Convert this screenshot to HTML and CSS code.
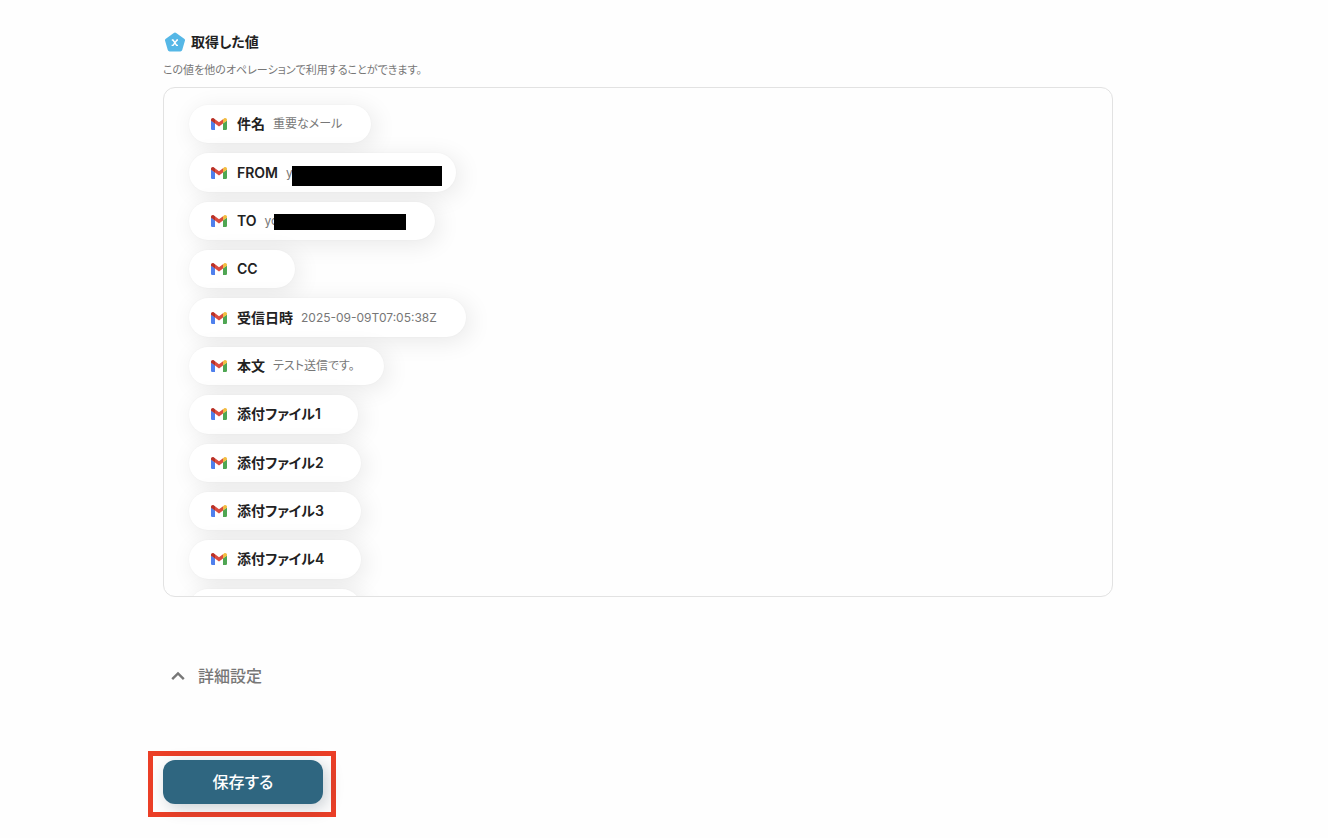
FILE: index.html
```html
<!DOCTYPE html>
<html lang="ja">
<head>
<meta charset="utf-8">
<meta name="viewport" content="width=device-width, initial-scale=1">
<title>取得した値</title>
<link rel="stylesheet" href="styles.css">
</head>
<body>
<svg class="defs" aria-hidden="true">
  <symbol id="gmail" viewBox="0 0 16 12">
    <path fill="#4f80ed" d="M0 2.5 4 5.2V12H1.2Q0 12 0 10.8Z"/>
    <path fill="#4fa653" d="M16 2.5 12 5.2V12h2.8q1.2 0 1.2-1.2Z"/>
    <path fill="#db4c3f" d="M4 1.2 8 4.2l4-3v4.2L8 8.4 4 5.4Z"/>
    <path fill="#f2bd42" d="M12 1.2 13 .5C14.3-.5 16 .3 16 1.8v1L12 5.6Z"/>
    <path fill="#b93127" d="M4 1.2 3 .5C1.7-.5 0 .3 0 1.8v1l4 2.8Z"/>
  </symbol>
</svg>
<main class="page">
  <section class="output">
    <h2 class="title">
      <svg class="title-icon" viewBox="0 0 20 20" aria-hidden="true"><path d="M10 2.500 18 8.300 15.300 17.500H4.700L2 8.300Z" fill="#55b7e6" stroke="#55b7e6" stroke-width="4" stroke-linejoin="round"/><path d="M6.800 8h1.200l3.600 5.400h1.400M13 8h-1L8 13.400H6.600" fill="none" stroke="#fff" stroke-width="1.400"/></svg>
      取得した値
    </h2>
    <p class="hint">この値を他のオペレーションで利用することができます。</p>
    <div class="panel">
      <ul class="list">
        <li class="pill"><svg class="mail"><use href="#gmail"/></svg><b class="name">件名</b><span class="value">重要なメール</span></li>
        <li class="pill"><svg class="mail"><use href="#gmail"/></svg><b class="name">FROM</b><span class="value value-masked">y<i class="mask mask-from"></i></span></li>
        <li class="pill"><svg class="mail"><use href="#gmail"/></svg><b class="name">TO</b><span class="value value-masked">yo<i class="mask mask-to"></i></span></li>
        <li class="pill"><svg class="mail"><use href="#gmail"/></svg><b class="name">CC</b><span class="value"></span></li>
        <li class="pill"><svg class="mail"><use href="#gmail"/></svg><b class="name">受信日時</b><span class="value">2025-09-09T07:05:38Z</span></li>
        <li class="pill"><svg class="mail"><use href="#gmail"/></svg><b class="name">本文</b><span class="value">テスト送信です。</span></li>
        <li class="pill"><svg class="mail"><use href="#gmail"/></svg><b class="name">添付ファイル1</b><span class="value"></span></li>
        <li class="pill"><svg class="mail"><use href="#gmail"/></svg><b class="name">添付ファイル2</b><span class="value"></span></li>
        <li class="pill"><svg class="mail"><use href="#gmail"/></svg><b class="name">添付ファイル3</b><span class="value"></span></li>
        <li class="pill"><svg class="mail"><use href="#gmail"/></svg><b class="name">添付ファイル4</b><span class="value"></span></li>
        <li class="pill"><svg class="mail"><use href="#gmail"/></svg><b class="name">添付ファイル5</b><span class="value"></span></li>
      </ul>
    </div>
  </section>
  <button class="details" type="button" aria-expanded="false">
    <svg class="chevron" viewBox="0 0 14 10" aria-hidden="true"><path d="m1.200 8.200 5.800-5.800 5.800 5.800" fill="none" stroke="currentColor" stroke-width="2.400"/></svg>
    詳細設定
  </button>
  <div class="highlight">
    <button class="save" type="button">保存する</button>
  </div>
</main>
</body>
</html>
```
FILE: styles.css
```css
* {
  box-sizing: border-box;
}

body {
  margin: 0;
  background: #fefefe;
  color: #222;
  font-family: Inter, "Noto Sans CJK JP", sans-serif;
  font-feature-settings: "palt";
}

button {
  border: 0;
  font: inherit;
  font-feature-settings: inherit;
  cursor: pointer;
}

.defs {
  position: absolute;
  width: 0;
  height: 0;
}

.page {
  display: flex;
  flex-direction: column;
  align-items: flex-start;
  padding: 30px 215px 20px 163px;
}

.output {
  width: 100%;
}

.title {
  display: flex;
  align-items: center;
  gap: 6px;
  margin: 0;
  padding-left: 2px;
  font-size: 14px;
  line-height: 24px;
  font-weight: 600;
}

.title-icon {
  width: 20px;
  height: 20px;
}

.hint {
  margin: 8px 0 9px;
  color: #777;
  font-size: 11px;
  line-height: 16px;
}

.panel {
  height: 510px;
  padding: 17px 25px;
  overflow-y: auto;
  scrollbar-width: none;
  border: 1px solid #e2e2e2;
  border-radius: 12px;
}

.list {
  display: grid;
  grid-auto-rows: 1fr;
  justify-items: start;
  gap: 10px;
  height: 522px;
  margin: 0;
  padding: 0;
  list-style: none;
}

.pill {
  display: flex;
  align-items: center;
  gap: 8px;
  padding: 0 29px 0 22px;
  border-radius: 20px;
  background: #fff;
  box-shadow: 4px 4px 24px rgba(0, 0, 0, 0.09), 0 0 2px rgba(0, 0, 0, 0.04);
  white-space: nowrap;
}

.mail {
  width: 16px;
  height: 12px;
  margin-right: 2px;
}

.name {
  font-size: 14px;
  line-height: 22px;
  font-weight: 600;
}

.value {
  color: #777;
  font-size: 12px;
  line-height: 22px;
}

.value-masked {
  position: relative;
  width: 141px;
}

.mask {
  position: absolute;
  background: #000;
}

.mask-from {
  top: 4px;
  left: 6px;
  width: 150px;
  height: 20px;
}

.mask-to {
  top: 4px;
  left: 9px;
  width: 132px;
  height: 16px;
}

.details {
  display: flex;
  align-items: center;
  gap: 13px;
  margin-top: 67px;
  padding: 0 8px;
  background: none;
  color: #777;
  font-size: 16px;
  line-height: 24px;
  font-weight: 500;
}

.chevron {
  width: 14px;
  height: 10px;
}

.highlight {
  margin: 63px 0 0 -15px;
  padding: 4px 8px 8px 10px;
  border: 5px solid #eb3f27;
}

.save {
  width: 160px;
  padding: 10px 16px;
  border-radius: 12px;
  background: #2f6680;
  box-shadow: 4px 4px 16px rgba(47, 72, 88, 0.25);
  color: #fff;
  font-size: 16px;
  line-height: 24px;
  font-weight: 500;
}
```
